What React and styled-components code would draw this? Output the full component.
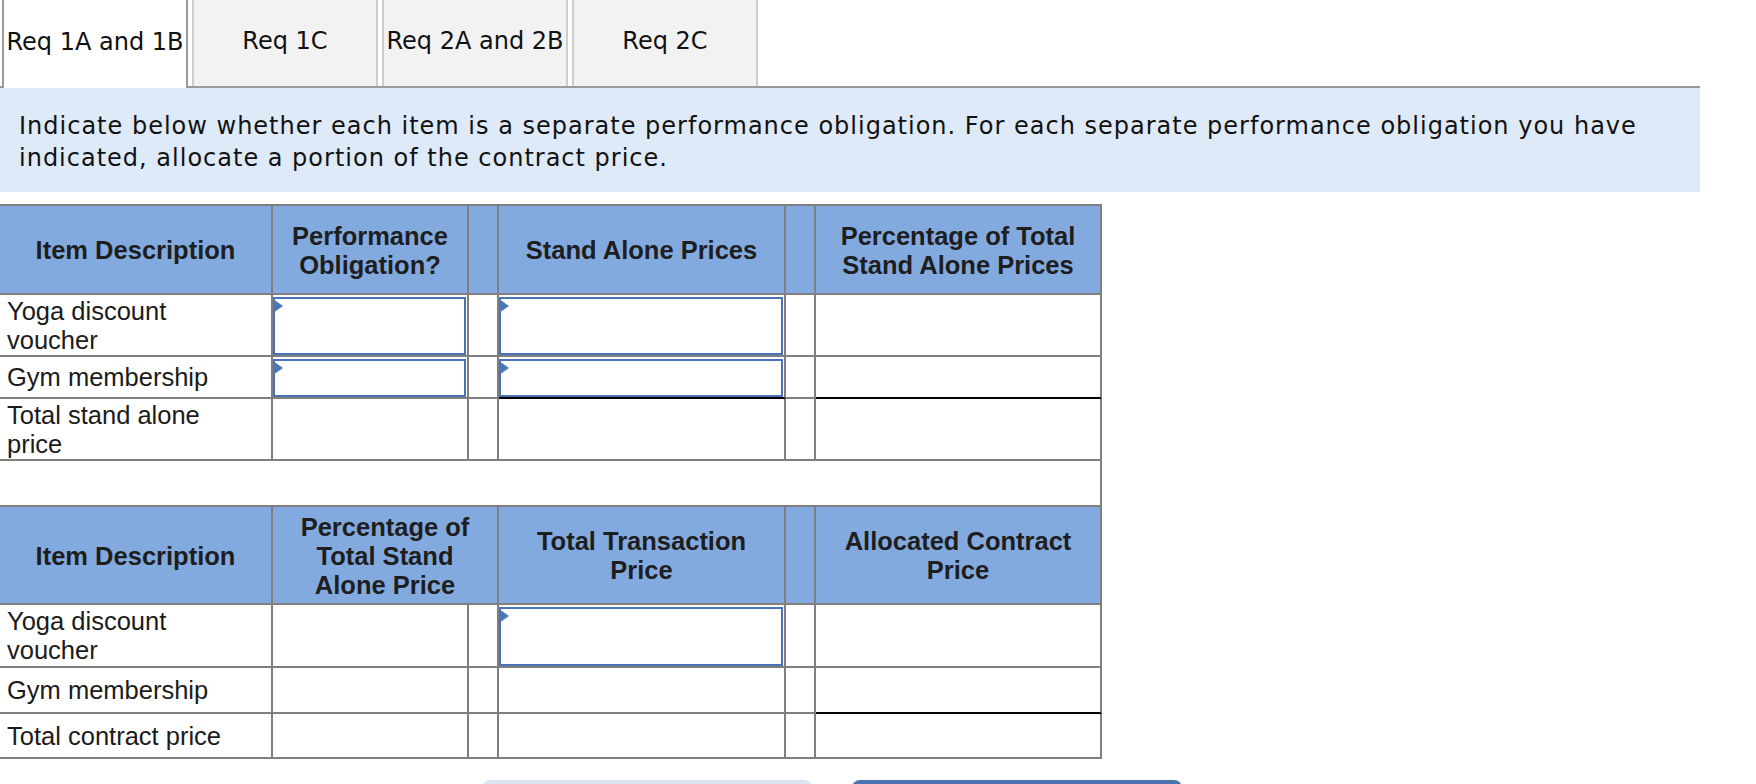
import React from "react";
import styled, { createGlobalStyle } from "styled-components";

const tabs = ["Req 1A and 1B", "Req 1C", "Req 2A and 2B", "Req 2C"];

// each body row: a label, then the five cells to its right
// "in" = entry field, "" = plain empty cell; a trailing "!" draws a total line
const allocationHead = [
  "Item Description",
  "Performance Obligation?",
  "",
  "Stand Alone Prices",
  "",
  "Percentage of Total Stand Alone Prices",
];

const allocationRows = [
  { label: "Yoga discount voucher", cells: ["in", "", "in", "", ""] },
  { label: "Gym membership", cells: ["in", "", "in!", "", "!"] },
  { label: "Total stand alone price", cells: ["", "", "", "", ""] },
];

const contractRows = [
  { label: "Yoga discount voucher", cells: ["", "", "in", "", ""] },
  { label: "Gym membership", cells: ["", "", "", "", "!"] },
  { label: "Total contract price", cells: ["", "", "", "", ""] },
];

const App = () => (
  <>
    <GlobalStyle />
    <Page>
      <TabBar>
        {tabs.map((t, i) => (
          <Tab key={t} $active={i === 0}>
            {t}
          </Tab>
        ))}
      </TabBar>

      <Instructions>
        Indicate below whether each item is a separate performance obligation. For each
        separate performance obligation you have indicated, allocate a portion of the
        contract price.
      </Instructions>

      <Grid>
        {allocationHead.map((h, i) => (
          <HeadCell key={`h1-${i}`}>{h}</HeadCell>
        ))}
        {allocationRows.map((row) => renderRow(row, "a"))}

        <Cell $span={6} />

        <HeadCell>Item Description</HeadCell>
        <HeadCell $span={2}>Percentage of Total Stand Alone Price</HeadCell>
        <HeadCell>Total Transaction Price</HeadCell>
        <HeadCell />
        <HeadCell>Allocated Contract Price</HeadCell>
        {contractRows.map((row) => renderRow(row, "c"))}
      </Grid>

      <ButtonRow>
        <NavButton aria-label="Previous requirement" $tone="light" />
        <NavButton aria-label="Next requirement" $tone="dark" />
      </ButtonRow>
    </Page>
  </>
);

const renderRow = ({ label, cells }, prefix) => (
  <React.Fragment key={`${prefix}-${label}`}>
    <LabelCell>{label}</LabelCell>
    {cells.map((c, i) => {
      const total = c.endsWith("!");
      if (c.startsWith("in")) {
        return (
          <InputCell key={i} $total={total}>
            <Field>
              <FieldInput type="text" aria-label={label} />
            </Field>
          </InputCell>
        );
      }
      return <Cell key={i} $total={total} />;
    })}
  </React.Fragment>
);

export default App;

/* ---------------- styled-components ---------------- */

const GlobalStyle = createGlobalStyle`
  html, body {
    margin: 0;
    padding: 0;
    background: #fff;
    overflow: hidden;
  }
  body {
    font-family: "Liberation Sans", Arial, sans-serif;
  }
`;

const Page = styled.div`
  width: 1700px;
`;

const TabBar = styled.div`
  display: flex;
  gap: 4px;
  height: 86px;
  padding-left: 2px;
  border-bottom: 2px solid #9a9a9a;
`;

const Tab = styled.button`
  box-sizing: border-box;
  width: 186px;
  height: ${(p) => (p.$active ? "88px" : "86px")};
  margin: 0;
  padding: 0 0 4px;
  display: flex;
  align-items: center;
  justify-content: center;
  font-family: "DejaVu Sans", Verdana, sans-serif;
  font-size: 24px;
  color: #111;
  white-space: nowrap;
  background: ${(p) => (p.$active ? "#fff" : "#f2f2f2")};
  border: 2px solid ${(p) => (p.$active ? "#9a9a9a" : "#cdcdcd")};
  border-top: none;
  border-bottom: none;
  position: relative;
  z-index: 1;
  cursor: pointer;
`;

const Instructions = styled.p`
  margin: 0;
  padding: 22px 40px 18px 19px;
  background: #deeaf7;
  font-family: "DejaVu Sans", Verdana, sans-serif;
  font-size: 24px;
  line-height: 32px;
  letter-spacing: 1px;
  color: #111;
`;

const Grid = styled.div`
  display: grid;
  grid-template-columns: 273px 196px 30px 287px 30px 286px;
  grid-template-rows: 89px 62px 42px 62px 46px 98px 63px 46px 45px;
  width: max-content;
  margin-top: 12px;
  border-top: 2px solid #7f7f7f;
`;

const Cell = styled.div`
  box-sizing: border-box;
  min-width: 0;
  display: flex;
  align-items: center;
  grid-column: span ${(p) => p.$span || 1};
  background: #fff;
  border-right: 2px solid #7f7f7f;
  border-bottom: 2px solid ${(p) => (p.$total ? "#000" : "#7f7f7f")};
`;

const HeadCell = styled(Cell)`
  justify-content: center;
  padding: 2px 8px 0;
  background: #83aadf;
  text-align: center;
  font-size: 25.5px;
  font-weight: 700;
  color: #1e1e1e;
`;

const LabelCell = styled(Cell)`
  padding: 1px 30px 0 7px;
  font-size: 25.5px;
  color: #1b1b1b;
`;

const InputCell = styled(Cell)`
  align-items: stretch;
  padding: 2px 1px 0 0;
`;

const Field = styled.div`
  position: relative;
  flex: 1;
  min-width: 0;
  display: flex;
  box-sizing: border-box;
  border: 2px solid #4a73b5;
  background: #fff;

  &::before {
    content: "";
    position: absolute;
    left: -2px;
    top: 0;
    border-left: 10px solid #4a76bc;
    border-top: 7px solid transparent;
    border-bottom: 7px solid transparent;
  }
`;

const FieldInput = styled.input`
  width: 100%;
  min-width: 0;
  box-sizing: border-box;
  border: none;
  outline: none;
  background: transparent;
  font-family: "Liberation Sans", Arial, sans-serif;
  font-size: 25.5px;
  padding: 0 8px;
`;

const ButtonRow = styled.div`
  display: flex;
  gap: 40px;
  margin: 21px 0 0 482px;
`;

const NavButton = styled.button`
  width: 330px;
  height: 56px;
  border: none;
  border-radius: 8px;
  background: ${(p) => (p.$tone === "dark" ? "#4a72b0" : "#dbe5f1")};
`;
